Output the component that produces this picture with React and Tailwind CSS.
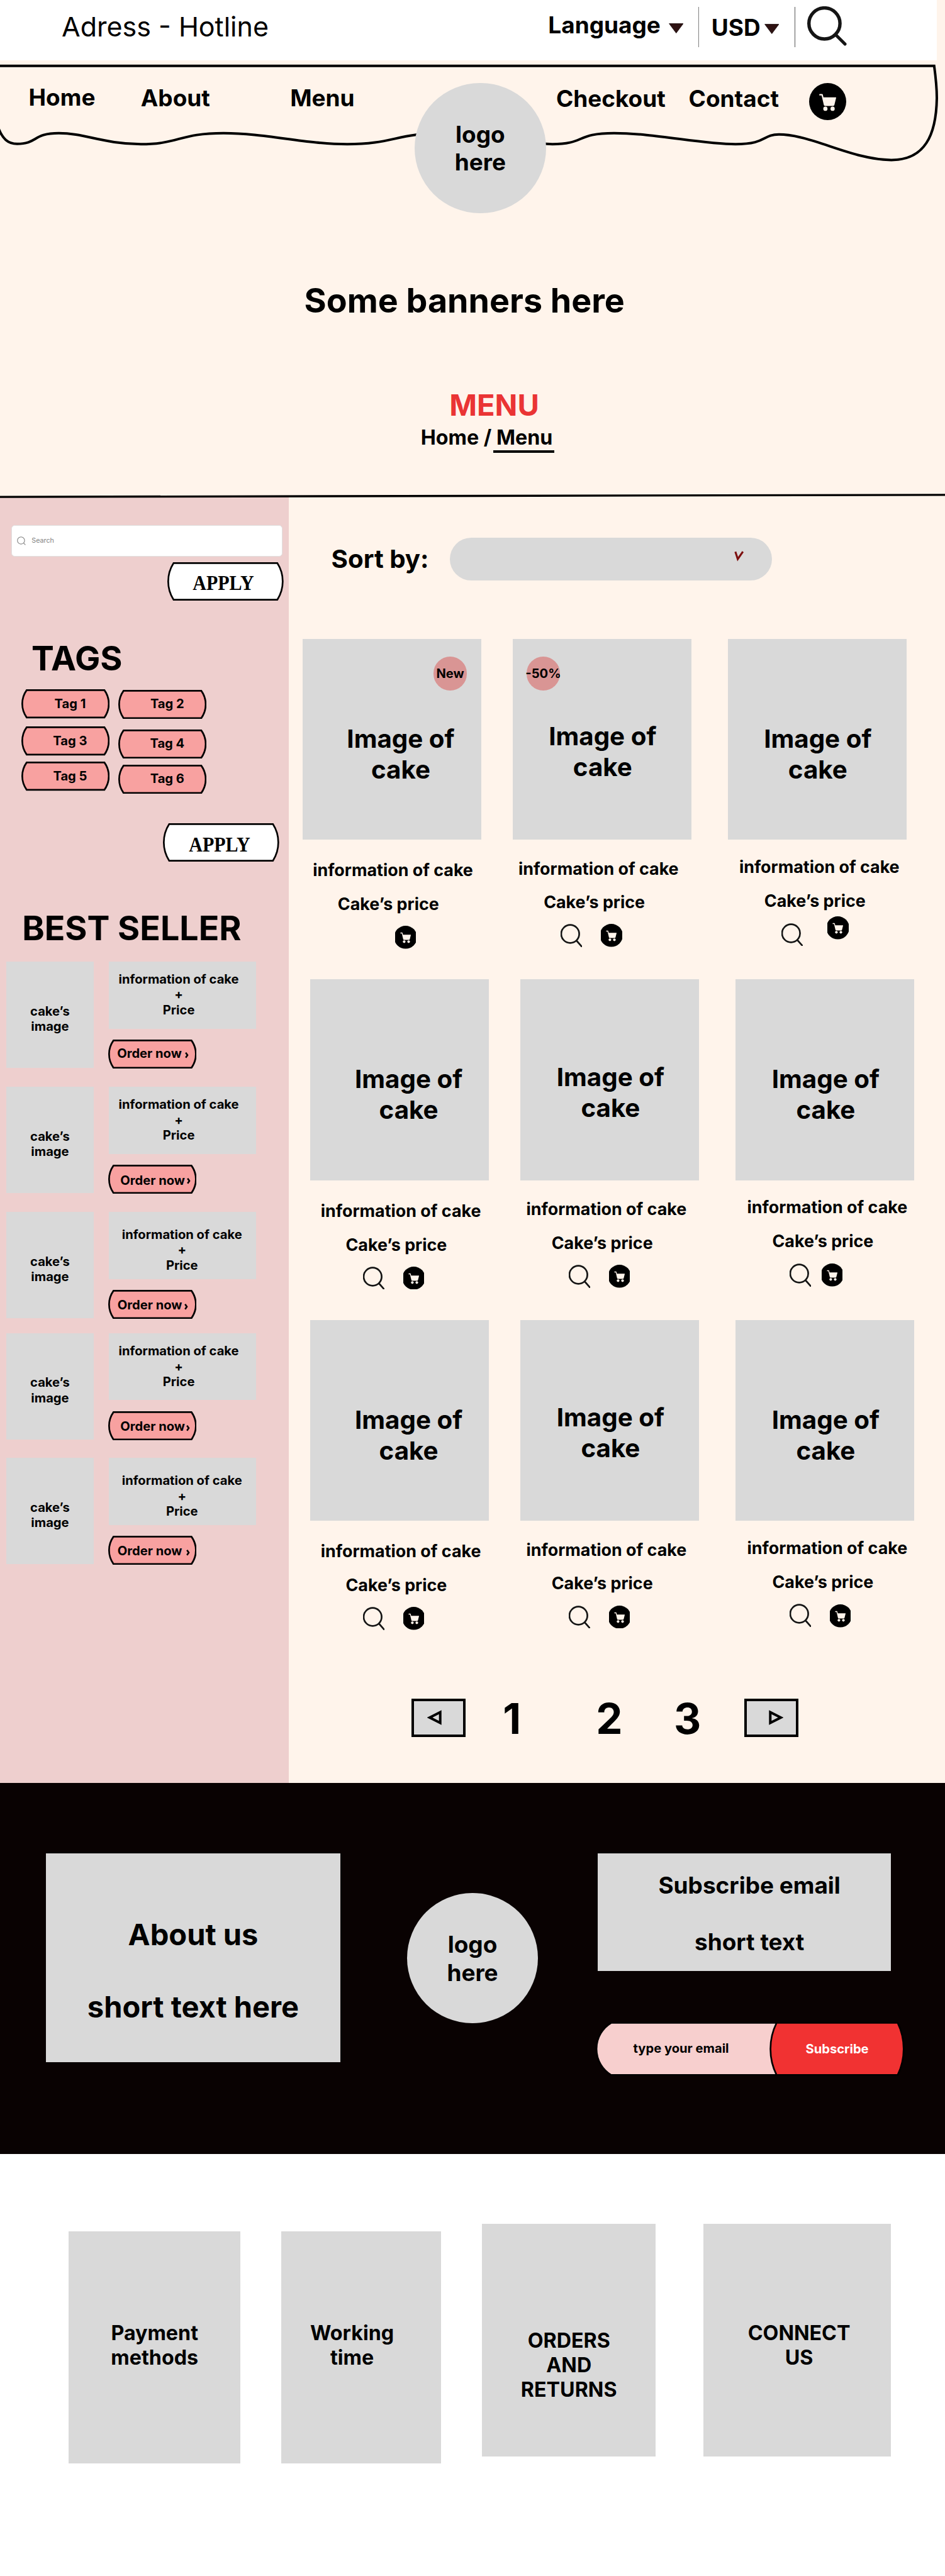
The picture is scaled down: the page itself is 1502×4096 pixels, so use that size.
import React from "react";

function Caret() {
  return (
    <svg className="h-[16.5px] w-[23.5px] shrink-0" viewBox="0 0 23.5 16.5">
      <path d="M0.6 0.6H22.9L11.75 15.6Z" fill="#2e1212" stroke="#120405" strokeWidth="0.8" />
    </svg>
  );
}

function SearchIcon({ className }) {
  return (
    <svg className={`h-[36.6px] w-[34px] shrink-0 ${className}`} viewBox="0 0 34 36.6" fill="none" stroke="#151515">
      <circle cx="15.3" cy="16" r="14.3" strokeWidth="2.7" />
      <path d="M25.6 27L33.4 35.8" strokeWidth="2.7" strokeLinecap="round" />
    </svg>
  );
}

function CartShape() {
  return (
    <>
      <circle cx="44" cy="44" r="44" fill="#000" />
      <g fill="#fff4eb">
        <path d="M25 26H31Q32 26 32.3 27L34 34H63.3Q64.3 34 64.1 35.2L60 52Q59.3 54.3 57 54.3H37.6Q35.5 54.3 34.9 52L29.6 29.6H25Q24.2 29.6 24.2 28.8V26.8Q24.2 26 25 26Z" />
        <circle cx="38.6" cy="61" r="5" />
        <circle cx="55.7" cy="61" r="5" />
      </g>
    </>
  );
}

function CartIcon({ className }) {
  return (
    <svg className={`h-[36.6px] w-[33.3px] shrink-0 ${className}`} viewBox="4 0 80 88">
      <CartShape />
    </svg>
  );
}

/* Button outline with flat top and bottom edges and bulging sides */
function Barrel({ w, h, inset, fill }) {
  const s = 1.35;
  const b = h - s;
  const half = (h - 2 * s) / 2;
  const r = (inset * inset + half * half) / (2 * inset);
  const left = inset + s;
  const right = w - inset - s;
  return (
    <svg className="absolute inset-0 h-full w-full" viewBox={`0 0 ${w} ${h}`}>
      <path
        d={`M${left} ${s}H${right}A${r} ${r} 0 0 1 ${right} ${b}H${left}A${r} ${r} 0 0 1 ${left} ${s}Z`}
        fill={fill}
        stroke="#000"
        strokeWidth="2.7"
      />
    </svg>
  );
}

function ApplyButton({ className }) {
  return (
    <div className={`relative h-[61px] w-[184.7px] ${className}`}>
      <Barrel w={184.7} h={61} inset={8.6} fill="#fff" />
      <div className="relative -ml-[6px] pt-[12.4px] text-center font-['Liberation_Serif',serif] text-[34.5px] leading-[40px] font-bold">
        <span className="inline-block scale-x-[0.87]">APPLY</span>
      </div>
    </div>
  );
}

function Tag({ label, className }) {
  return (
    <div className={`relative h-[46.2px] w-[140.3px] ${className}`}>
      <Barrel w={140.3} h={46.2} inset={7} fill="#f8a1a0" />
      <div className="relative ml-[15.4px] pt-[10.2px] text-center text-[20.15px]">{label}</div>
    </div>
  );
}

const sellers = [
  { gap: "mt-[22.2px]", info: "pt-[15.9px] pr-[11.7px]", order: "pt-[10.1px] pl-[14.4px]", arrow: "left-[122.5px] top-[20px]" },
  { gap: "mt-[30px]", info: "pt-[16.2px] pr-[11.7px]", order: "pt-[12.4px] pl-[19.5px]", arrow: "left-[125.2px] top-[20.3px]" },
  { gap: "mt-[29.9px]", info: "pt-[23.7px] pr-[1.4px]", order: "pt-[11.8px] pl-[15px]", arrow: "left-[121.6px] top-[21.4px]" },
  { gap: "mt-[23.8px]", info: "pt-[16.5px] pr-[11.7px]", order: "pt-[12.4px] pl-[19.5px]", arrow: "left-[124.6px] top-[22.5px]" },
  { gap: "mt-[29.4px]", info: "pt-[24.1px] pr-[1.4px]", order: "pt-[11.3px] pl-[15px]", arrow: "left-[124.3px] top-[21.8px]" },
];

function Seller({ item }) {
  return (
    <div className={`ml-[10.2px] flex h-[169px] text-[20.15px] ${item.gap}`}>
      <div className="h-[169px] w-[138.5px] bg-[#d9d9d9] pt-[66.4px] text-center">
        cake’s
        <br />
        image
      </div>
      <div className="ml-[24.6px]">
        <div className={`h-[106.5px] w-[233.3px] bg-[#d9d9d9] text-center whitespace-nowrap ${item.info}`}>
          information of cake
          <br />+<br />
          Price
        </div>
        <div className="relative mt-[17.5px] -ml-[1.5px] h-[46.2px] w-[140.7px]">
          <Barrel w={140.7} h={46.2} inset={7} fill="#f8a1a0" />
          <div className={`relative whitespace-nowrap ${item.order}`}>Order now</div>
          <svg className={`absolute h-[10px] w-[6px] ${item.arrow}`} viewBox="0 0 6 10">
            <path d="M1.2 0.8L4 4.8L1.2 8.8" fill="none" stroke="#000" strokeWidth="2.6" />
          </svg>
        </div>
      </div>
    </div>
  );
}

function Product({ p }) {
  return (
    <div className="h-[541.5px] w-[284px] shrink-0">
      <div className={`relative h-[319.7px] bg-[#d9d9d9] text-center text-[40.3px] leading-[49px] ${p.img}`}>
        {p.badge && (
          <div
            className={`absolute top-[28.7px] flex h-[53.3px] w-[53.4px] items-center justify-center rounded-full bg-[#d99594] text-[20.15px] leading-[24px] whitespace-nowrap ${p.badgePos}`}
          >
            {p.badge}
          </div>
        )}
        Image of
        <br />
        cake
      </div>
      <div className={`text-center text-[26.87px] whitespace-nowrap ${p.info}`}>information of cake</div>
      <div className={`mt-[21.3px] text-center text-[26.87px] whitespace-nowrap ${p.price}`}>Cake’s price</div>
      <div className={`flex items-start ${p.icons}`}>
        {!p.noSearch && <SearchIcon className="" />}
        <CartIcon className={p.cart} />
      </div>
    </div>
  );
}

const col1 = { img: "pt-[134.2px] pl-[28.4px]", info: "mt-[32.1px] pl-[3.5px]", price: "pr-[11px]" };
const col2 = { img: "pt-[130.8px] pl-[2px]", info: "mt-[29.4px] pr-[11px]", price: "pr-[24.4px]" };
const col3 = { img: "pt-[134.2px] pl-[2px]", info: "mt-[26.5px] pl-[7px]", price: "pr-[7px]" };

const rows = [
  {
    cls: "ml-[22px]",
    items: [
      { ...col1, badge: "New", badgePos: "left-[208px]", noSearch: true, icons: "pl-[147.3px] mt-[18.3px]", cart: "" },
      { ...col2, badge: "-50%", badgePos: "left-[22px]", icons: "pl-[76.7px] mt-[18.4px]", cart: "ml-[30px]" },
      { ...col3, icons: "pl-[85.3px] mt-[19.6px]", cart: "ml-[39.4px] -mt-[10.6px]" },
    ],
  },
  {
    cls: "ml-[34.6px]",
    items: [
      { ...col1, icons: "pl-[83.4px] mt-[18.7px]", cart: "ml-[30px]" },
      { ...col2, icons: "pl-[76.7px] mt-[18.7px]", cart: "ml-[30px]" },
      { ...col3, icons: "pl-[86px] mt-[19.5px]", cart: "ml-[16.6px]" },
    ],
  },
  {
    cls: "ml-[34.6px]",
    items: [
      { ...col1, icons: "pl-[83.4px] mt-[18.7px]", cart: "ml-[30px]" },
      { ...col2, icons: "pl-[76.7px] mt-[18.7px]", cart: "ml-[30px]" },
      { ...col3, icons: "pl-[86px] mt-[19.4px]", cart: "ml-[29.3px] mt-[0.8px]" },
    ],
  },
];

function TopBar() {
  return (
    <div className="flex h-[96.1px] w-[1489px] items-start bg-white text-[36.95px] whitespace-nowrap">
      <div className="mt-[15.6px] ml-[92.5px] w-[340px] text-center text-[43px] font-normal">Adress - Hotline</div>
      <div className="mt-[18.3px] ml-[430.1px] w-[196px] text-center">Language</div>
      <div className="mt-[37.3px] ml-[4.2px] flex">
        <Caret />
      </div>
      <div className="mt-[10.8px] ml-[23.6px] h-[64.5px] w-px bg-[#808080]" />
      <div className="mt-[21.6px] ml-[13.9px] w-[90px] text-center">USD</div>
      <div className="mt-[37.8px] flex">
        <Caret />
      </div>
      <div className="mt-[10.8px] ml-[24.3px] h-[64.5px] w-px bg-[#555]" />
      <svg className="mt-[9.5px] ml-[19.5px] h-[63px] w-[63px]" viewBox="0 0 63 63" fill="none" stroke="#151515">
        <circle cx="27.4" cy="27.3" r="24.7" strokeWidth="5.4" />
        <path d="M45.5 45.5L60 60" strokeWidth="5" strokeLinecap="round" />
      </svg>
    </div>
  );
}

function Nav() {
  return (
    <div className="relative flex h-[242.5px] items-start text-[36.95px] whitespace-nowrap">
      <svg className="absolute top-0 left-0 h-[170px] w-[1502px]" viewBox="0 96.1 1502 170" fill="none" stroke="#000" strokeWidth="4">
        <path d="M-6 104.9H1484.8C1487.5 125 1489 140 1489 156C1488 215 1470 254.5 1416.8 254.5C1355 254.5 1290 213.9 1238 213.9C1211 213.9 1219 229.3 1169 229.3C1115 229.3 1040 211.8 976 211.8C915 211.8 930 229.3 878 229.3C840 229.3 780 211.8 706 211.8C630 211.8 625 229.3 552 229.3C485 229.3 422 211.8 355.4 211.8C285 211.8 285 229.3 224 229.3C165 229.3 135 211.8 93.4 211.8C52 211.8 60 228.8 27.3 228.8C12 228.8 4 220 -2 205" />
      </svg>
      <div className="mt-[36.8px] ml-[38.5px] w-[120px] text-center">Home</div>
      <div className="mt-[38px] ml-[55.3px] w-[130px] text-center">About</div>
      <div className="mt-[38px] ml-[108.6px] w-[120px] text-center">Menu</div>
      <div className="relative mt-[35.5px] ml-[86.6px] h-[207px] w-[208.9px] rounded-full bg-[#d9d9d9] pt-[60px] text-center">
        logo
        <br />
        here
      </div>
      <div className="mt-[39.3px] ml-[8px] w-[190px] text-center">Checkout</div>
      <div className="mt-[39.3px] ml-[20.4px] w-[160px] text-center">Contact</div>
      <svg className="mt-[35.5px] ml-[40.2px] h-[59px] w-[59px]" viewBox="0 0 88 88">
        <CartShape />
      </svg>
    </div>
  );
}

function Banner() {
  return (
    <div className="whitespace-nowrap">
      <div className="mt-[106.4px] w-[1476.4px] text-center text-[53.74px]">Some banners here</div>
      <div className="mt-[105.6px] ml-[635.5px] w-[300px] text-center text-[47.02px] text-[#ea3434]">MENU</div>
      <div className="mt-[3.8px] ml-[623.5px] w-[300px] text-center text-[32.24px]">Home / Menu</div>
      <div className="mt-[1.1px] ml-[783.6px] h-[3.3px] w-[97.7px] bg-black" />
      <svg className="relative mt-[65.7px] -mb-[4.5px] h-[8px] w-[1502px]" viewBox="0 0 1502 8">
        <path d="M0 5.1L1502 1.9" stroke="#000" strokeWidth="3.36" />
      </svg>
    </div>
  );
}

function Sidebar() {
  return (
    <aside className="h-full w-[458.8px] shrink-0 bg-[#eecfce]">
      <div className="flow-root">
        <div className="mt-[45.8px] ml-[18.3px] flex h-[50.4px] w-[430.9px] items-center rounded-[5.4px] border border-[#e0e0e0] bg-white text-[10.75px] font-normal text-[#828282]">
          <svg className="ml-[8px] h-[14px] w-[14px]" viewBox="0 0 14 14" fill="none" stroke="#828282" strokeWidth="1.1">
            <circle cx="6.4" cy="6.4" r="5.7" />
            <path d="M10.4 10.4L13.4 13.4" />
          </svg>
          <span className="ml-[9px]">Search</span>
        </div>
        <ApplyButton className="mt-[9px] ml-[266px]" />
        <div className="mt-[58.7px] ml-[22.2px] w-[200px] text-center text-[53.74px]">TAGS</div>
        <div className="mt-[17.6px] ml-[33.6px] flex h-[166.2px] items-start gap-[14.1px]">
          <div>
            <Tag label="Tag 1" className="" />
            <Tag label="Tag 3" className="mt-[12.8px]" />
            <Tag label="Tag 5" className="mt-[9.9px]" />
          </div>
          <div className="pt-[0.4px]">
            <Tag label="Tag 2" className="" />
            <Tag label="Tag 4" className="mt-[16.9px]" />
            <Tag label="Tag 6" className="mt-[10.3px]" />
          </div>
        </div>
        <ApplyButton className="mt-[46.6px] ml-[259.4px]" />
        <div className="mt-[72.5px] ml-[9.4px] w-[400px] text-center text-[53.74px] whitespace-nowrap">BEST SELLER</div>
        <div className="-mt-[0.6px] flow-root">
          {sellers.map((item, i) => (
            <Seller key={i} item={item} />
          ))}
        </div>
      </div>
    </aside>
  );
}

function Pagination() {
  return (
    <div className="mt-[60.6px] ml-[195.3px] flex items-start text-[67.17px]">
      <div className="h-[61.2px] w-[86px] border-4 border-black bg-[#d9d9d9]">
        <svg className="mt-[14.1px] ml-[21.3px] h-[24px] w-[23px]" viewBox="0 0 23 24">
          <path d="M4 12L20.7 3.5V20.5Z" fill="none" stroke="#000" strokeWidth="4" />
        </svg>
      </div>
      <div className="-mt-[9.1px] ml-[43.7px] w-[60px] text-center">1</div>
      <div className="-mt-[9.1px] ml-[94.7px] w-[60px] text-center">2</div>
      <div className="-mt-[9.1px] ml-[64.3px] w-[60px] text-center">3</div>
      <div className="ml-[60.7px] h-[61.2px] w-[86px] border-4 border-black bg-[#d9d9d9]">
        <svg className="mt-[14.1px] ml-[34.3px] h-[24px] w-[23px]" viewBox="0 0 23 24">
          <path d="M19 12L2.3 3.5V20.5Z" fill="none" stroke="#000" strokeWidth="4" />
        </svg>
      </div>
    </div>
  );
}

function Products() {
  return (
    <main className="flow-root flex-1">
      <div className="mt-[66.6px] flex items-start">
        <div className="mt-[9.5px] ml-[45.3px] w-[200px] text-center text-[40.3px] whitespace-nowrap">Sort by:</div>
        <div className="ml-[11.3px] h-[67.5px] w-[511.3px] rounded-full bg-[#d9d9d9]">
          <svg className="mt-[20.4px] ml-[452px] h-[18px] w-[16px]" viewBox="0 0 16 18">
            <path d="M1.8 1.2L5.6 13L13.8 1.2" fill="none" stroke="#7d0f0f" strokeWidth="3.1" />
          </svg>
        </div>
      </div>
      <div className="mt-[92.6px]">
        {rows.map((row, i) => (
          <div key={i} className={`flex ${row.cls}`}>
            <Product p={row.items[0]} />
            <div className="w-[50px] shrink-0" />
            <Product p={row.items[1]} />
            <div className="w-[58px] shrink-0" />
            <Product p={row.items[2]} />
          </div>
        ))}
      </div>
      <Pagination />
    </main>
  );
}

function DarkFooter() {
  return (
    <footer className="flex h-[589.6px] items-start bg-[#090202] whitespace-nowrap">
      <div className="mt-[111.9px] ml-[72.8px] h-[331.5px] w-[468.4px] bg-[#d9d9d9] pt-[101px] text-center text-[47.02px]">
        <div>About us</div>
        <div className="mt-[57.5px]">short text here</div>
      </div>
      <div className="mt-[174.6px] ml-[105.4px] h-[207px] w-[208.8px] rounded-full bg-[#d9d9d9] pt-[60px] text-center text-[36.95px]">
        logo
        <br />
        here
      </div>
      <div className="ml-[90.8px]">
        <div className="mt-[111.9px] ml-[4px] h-[186.4px] w-[465.6px] bg-[#d9d9d9] pt-[28.8px] pl-[16.4px] text-center text-[36.95px]">
          <div>Subscribe email</div>
          <div className="mt-[45.2px]">short text</div>
        </div>
        <div className="relative mt-[81px] flex h-[86px] w-[492px] text-[20.15px]">
          <svg className="absolute inset-0 h-full w-full" viewBox="0 0 492 86" stroke="#000" strokeWidth="2.7">
            <path d="M25.3 1.5H289.5V84.3H25.3A48.5 48.5 0 0 1 25.3 1.5Z" fill="#f7cfce" />
            <path d="M288.3 1.5H480.8A95 95 0 0 1 480.8 84.3H288.3A93 93 0 0 1 288.3 1.5Z" fill="#f13232" />
          </svg>
          <div className="relative ml-[36.4px] w-[200px] pt-[30.4px] text-center">type your email</div>
          <div className="relative ml-[48px] w-[200px] pt-[31.2px] text-center text-white">Subscribe</div>
        </div>
      </div>
    </footer>
  );
}

function InfoBoxes() {
  return (
    <div className="flex h-[670.9px] items-start bg-white text-center text-[32.24px]">
      <div className="mt-[122.7px] ml-[109.2px] h-[369.5px] w-[273px] bg-[#d9d9d9] pt-[142.3px]">
        Payment
        <br />
        methods
      </div>
      <div className="mt-[122.7px] ml-[65.1px] h-[369.5px] w-[253.9px] bg-[#d9d9d9] pt-[142.3px] pr-[29.4px]">
        Working
        <br />
        time
      </div>
      <div className="mt-[111.2px] ml-[65.1px] h-[369.5px] w-[275.9px] bg-[#d9d9d9] pt-[165.4px]">
        ORDERS
        <br />
        AND
        <br />
        RETURNS
      </div>
      <div className="mt-[111.2px] ml-[75.7px] h-[369.5px] w-[297.9px] bg-[#d9d9d9] pt-[153.8px] pl-[6.6px]">
        CONNECT
        <br />
        US
      </div>
    </div>
  );
}

export default function App() {
  return (
    <div className="h-[4096px] w-[1502px] overflow-hidden bg-[#fff4eb] font-[Inter,sans-serif] leading-[1.21] font-bold text-black">
      <TopBar />
      <Nav />
      <Banner />
      <div className="flex h-[2046.5px]">
        <Sidebar />
        <Products />
      </div>
      <DarkFooter />
      <InfoBoxes />
    </div>
  );
}
